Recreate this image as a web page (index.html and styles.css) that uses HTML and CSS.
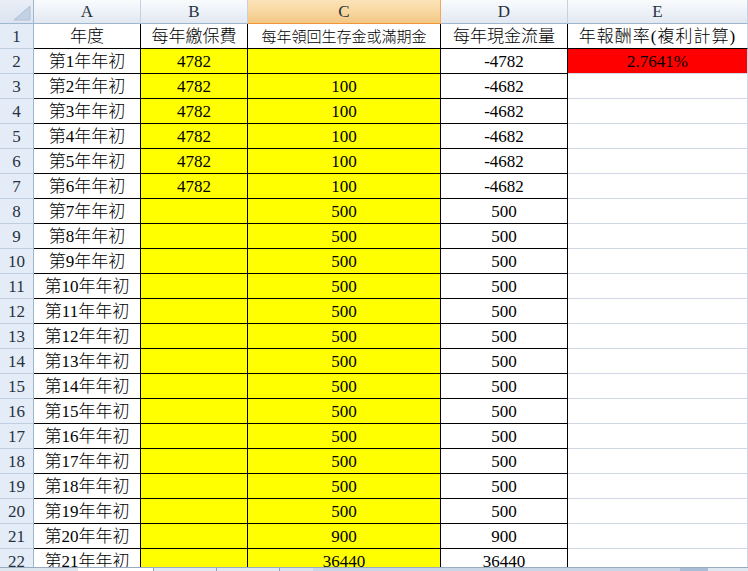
FILE: index.html
```html
<!DOCTYPE html>
<html lang="zh-Hant">
<head>
<meta charset="utf-8">
<title>Sheet</title>
<link rel="stylesheet" href="styles.css">
</head>
<body>
<div class="sheet">
  <div class="grid">
    <div class="corner"><svg class="tri" width="33" height="23" viewBox="0 0 33 23"><polygon points="30,6 30,20 14,20" fill="#c3d1e4" stroke="#b0c1d8" stroke-width="1"/></svg></div>
    <div class="ch">A</div><div class="ch">B</div><div class="ch sel">C</div><div class="ch">D</div><div class="ch">E</div>

    <div class="rh">1</div><div class="c">年度</div><div class="c">每年繳保費</div><div class="c sm">每年領回生存金或滿期金</div><div class="c">每年現金流量</div><div class="e e1">年報酬率(複利計算)</div>
    <div class="rh">2</div><div class="c">第1年年初</div><div class="c y">4782</div><div class="c y"></div><div class="c">-4782</div><div class="e r">2.7641%</div>
    <div class="rh">3</div><div class="c">第2年年初</div><div class="c y">4782</div><div class="c y">100</div><div class="c">-4682</div><div class="e"></div>
    <div class="rh">4</div><div class="c">第3年年初</div><div class="c y">4782</div><div class="c y">100</div><div class="c">-4682</div><div class="e"></div>
    <div class="rh">5</div><div class="c">第4年年初</div><div class="c y">4782</div><div class="c y">100</div><div class="c">-4682</div><div class="e"></div>
    <div class="rh">6</div><div class="c">第5年年初</div><div class="c y">4782</div><div class="c y">100</div><div class="c">-4682</div><div class="e"></div>
    <div class="rh">7</div><div class="c">第6年年初</div><div class="c y">4782</div><div class="c y">100</div><div class="c">-4682</div><div class="e"></div>
    <div class="rh">8</div><div class="c">第7年年初</div><div class="c y"></div><div class="c y">500</div><div class="c">500</div><div class="e"></div>
    <div class="rh">9</div><div class="c">第8年年初</div><div class="c y"></div><div class="c y">500</div><div class="c">500</div><div class="e"></div>
    <div class="rh">10</div><div class="c">第9年年初</div><div class="c y"></div><div class="c y">500</div><div class="c">500</div><div class="e"></div>
    <div class="rh">11</div><div class="c">第10年年初</div><div class="c y"></div><div class="c y">500</div><div class="c">500</div><div class="e"></div>
    <div class="rh">12</div><div class="c">第11年年初</div><div class="c y"></div><div class="c y">500</div><div class="c">500</div><div class="e"></div>
    <div class="rh">13</div><div class="c">第12年年初</div><div class="c y"></div><div class="c y">500</div><div class="c">500</div><div class="e"></div>
    <div class="rh">14</div><div class="c">第13年年初</div><div class="c y"></div><div class="c y">500</div><div class="c">500</div><div class="e"></div>
    <div class="rh">15</div><div class="c">第14年年初</div><div class="c y"></div><div class="c y">500</div><div class="c">500</div><div class="e"></div>
    <div class="rh">16</div><div class="c">第15年年初</div><div class="c y"></div><div class="c y">500</div><div class="c">500</div><div class="e"></div>
    <div class="rh">17</div><div class="c">第16年年初</div><div class="c y"></div><div class="c y">500</div><div class="c">500</div><div class="e"></div>
    <div class="rh">18</div><div class="c">第17年年初</div><div class="c y"></div><div class="c y">500</div><div class="c">500</div><div class="e"></div>
    <div class="rh">19</div><div class="c">第18年年初</div><div class="c y"></div><div class="c y">500</div><div class="c">500</div><div class="e"></div>
    <div class="rh">20</div><div class="c">第19年年初</div><div class="c y"></div><div class="c y">500</div><div class="c">500</div><div class="e"></div>
    <div class="rh">21</div><div class="c">第20年年初</div><div class="c y"></div><div class="c y">900</div><div class="c">900</div><div class="e"></div>
    <div class="rh">22</div><div class="c">第21年年初</div><div class="c y"></div><div class="c y">36440</div><div class="c">36440</div><div class="e"></div>
  </div>
</div>
<div class="tabs">
  <div class="t-nav"></div>
  <div class="t-active"></div>
  <div class="t-tab"></div>
  <div class="t-tab"></div>
  <div class="t-gap"></div>
  <div class="t-bar"></div>
  <div class="t-thumb"></div>
  <div class="t-end"></div>
</div>
</body>
</html>
```

FILE: styles.css
```css
html, body {
  margin: 0;
  padding: 0;
  background: #ffffff;
  overflow: hidden;
}
body {
  width: 748px;
  height: 571px;
  font-family: "Liberation Serif", "Noto Sans CJK TC", serif;
  font-size: 17px;
  font-weight: 300;
  color: #000;
}
.sheet {
  height: 567px;
  width: 748px;
  overflow: hidden;
}
.grid {
  display: grid;
  grid-template-columns: 34px 107px 107px 193px 127px 180px;
  grid-template-rows: 24px;
  grid-auto-rows: 25px;
  width: 748px;
}
.grid > div {
  box-sizing: border-box;
  display: flex;
  align-items: center;
  justify-content: center;
  line-height: 20px;
  white-space: nowrap;
  overflow: hidden;
}
.corner {
  background: linear-gradient(#e9eef6, #dbe4f0);
  border-right: 1px solid #9eb6ce;
  border-bottom: 1px solid #9eb6ce;
  position: relative;
}
.tri {
  position: absolute;
  left: 0;
  top: 0;
}
.ch {
  background: linear-gradient(#f9fbfd 0%, #eef2f8 50%, #e2e8f1 100%);
  border-right: 1px solid #c5d2e2;
  border-bottom: 1px solid #9eb6ce;
  color: #27313f;
  padding-top: 1px;
}
.ch.sel {
  background: linear-gradient(#fbe3b8 0%, #f8d7a0 50%, #f3c784 100%);
  border-right: 1px solid #f0a85a;
  border-bottom: 1px solid #f29536;
  color: #27313f;
}
.rh {
  background: #e4ecf7;
  border-right: 1px solid #9eb6ce;
  border-bottom: 1px solid #c0cfe0;
  color: #27313f;
  padding-top: 1px;
}
.c {
  border-right: 1px solid #000;
  border-bottom: 1px solid #000;
  padding-top: 1px;
}
.c.sm {
  font-size: 15px;
}
.y {
  background: #ffff00;
}
.e {
  border-right: 1px solid #d0d7e5;
  border-bottom: 1px solid #d0d7e5;
  padding-top: 1px;
}
.e1 {
  border-bottom: 1px solid #000;
  letter-spacing: 1px;
}
.r {
  background: #ff0000;
}
.tabs {
  display: flex;
  height: 4px;
  width: 748px;
  overflow: hidden;
  background: #d5dfec;
  border-top: 1px solid #9aaac0;
  box-sizing: border-box;
}
.t-nav { width: 78px; background: #dde5ef; }
.t-active { width: 75px; background: #ffffff; }
.t-tab { width: 62px; background: #e3e9f1; border-left: 1px solid #8ea2bd; }
.t-gap { width: 33px; background: #dbe3ee; border-left: 1px solid #8ea2bd; }
.t-bar { width: 367px; background: #c8d6e8; }
.t-thumb { width: 28px; background: #a9bdd6; }
.t-end { flex: 1; background: #dfe7f1; }
```
